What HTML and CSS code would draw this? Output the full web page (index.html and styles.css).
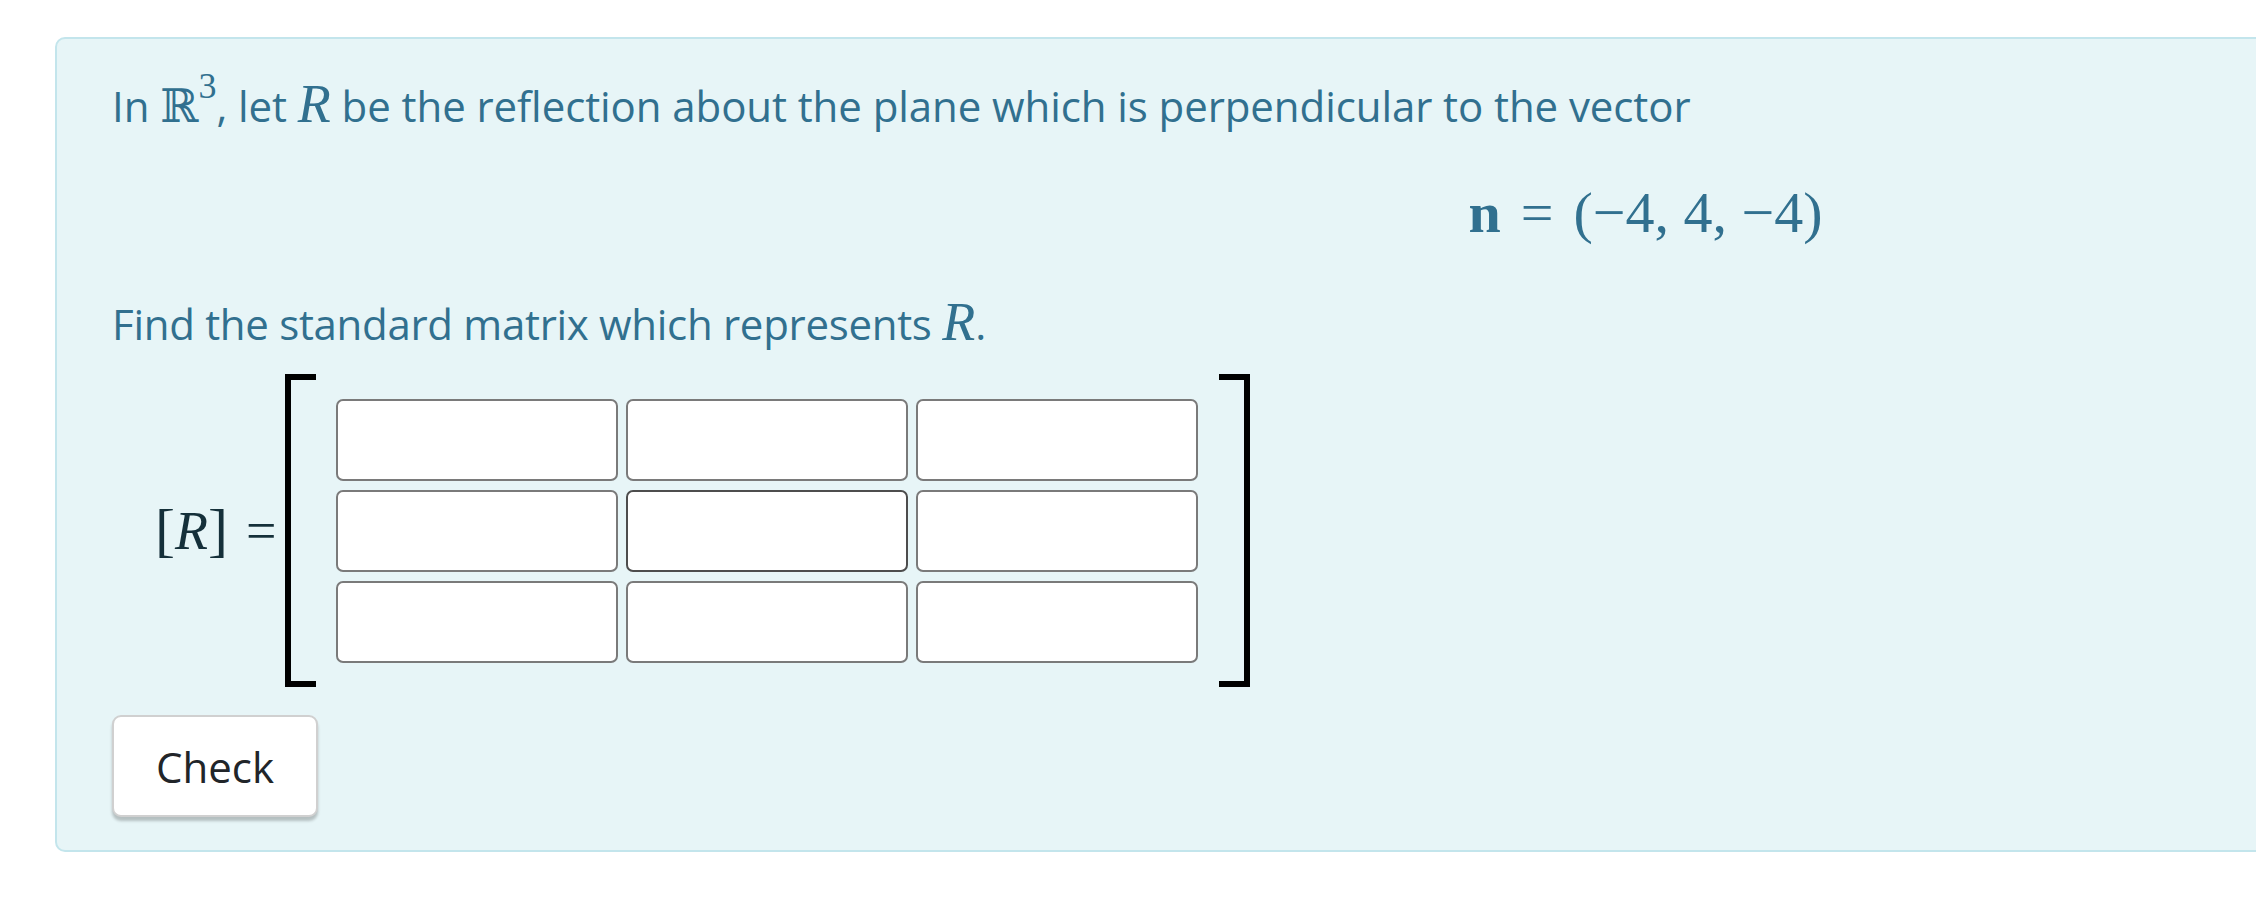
FILE: index.html
```html
<!DOCTYPE html>
<html lang="en">
<head>
<meta charset="utf-8">
<link rel="stylesheet" href="styles.css">
</head>
<body>
<div class="card">
  <p class="line1">In <span class="m"><span class="bb">ℝ</span><sup class="sup">3</sup></span>, let <span class="m mi">R</span> be the reflection about the plane which is perpendicular to the vector</p>
  <div class="display"><span class="bold">n</span><span class="rel">=</span>(−4, 4, −4)</div>
  <p class="line2">Find the standard matrix which represents <span class="m mi">R</span>.</p>
  <div class="eq">
    <div class="lhs"><span class="br">[</span><span class="mi">R</span><span class="br">]</span><span class="eqsign">=</span></div>
    <div class="bracket left"></div>
    <div class="grid">
      <input class="cell" type="text"><input class="cell" type="text"><input class="cell" type="text">
      <input class="cell" type="text"><input class="cell focus" type="text"><input class="cell" type="text">
      <input class="cell" type="text"><input class="cell" type="text"><input class="cell" type="text">
    </div>
    <div class="bracket right"></div>
  </div>
  <button class="check" type="button">Check</button>
</div>
</body>
</html>
```
FILE: styles.css
```css
html, body {
  margin: 0;
  padding: 0;
  background: #ffffff;
  overflow: hidden;
}
body {
  font-family: "Open Sans", "Noto Sans", sans-serif;
  color: #31708f;
}
.card {
  box-sizing: border-box;
  width: 3181px;
  margin: 37px 0 0 55px;
  padding: 33px 55px 33px 55px;
  border: 2px solid #c3e5ec;
  border-radius: 10px;
  background: #e7f5f7;
}
.line1, .line2 {
  margin: 0;
  font-size: 42px;
  line-height: 64px;
  white-space: nowrap;
}
.line1 {
  letter-spacing: -0.08px;
}
.line2 {
  letter-spacing: -0.3px;
}
.m {
  font-family: "Liberation Serif", "DejaVu Serif", serif;
  font-size: 54px;
  letter-spacing: 0;
}
.mi {
  font-style: italic;
}
.bb {
  font-family: "DejaVu Serif", serif;
  font-size: 46px;
  font-weight: 300;
}
.sup {
  font-size: 36px;
  vertical-align: 24px;
  line-height: 0;
}
.display {
  margin: 40px 0 42px;
  text-align: center;
  font-family: "Liberation Serif", "DejaVu Serif", serif;
  font-size: 58px;
  line-height: 70px;
}
.bold {
  font-weight: bold;
}
.rel {
  margin: 0 20px;
}
.eq {
  display: flex;
  align-items: center;
  margin-top: 18px;
}
.lhs {
  width: 130px;
  margin-left: 43px;
  display: flex;
  align-items: center;
  font-family: "Liberation Serif", "DejaVu Serif", serif;
  font-size: 54px;
  color: #15303a;
}
.lhs .br {
  font-style: normal;
  font-size: 60px;
  font-weight: 300;
}
.eqsign {
  margin-left: 18px;
}
.bracket {
  box-sizing: border-box;
  width: 31px;
  height: 313px;
  border-top: 6px solid #000;
  border-bottom: 6px solid #000;
}
.bracket.left {
  border-left: 6px solid #000;
  margin-right: 20px;
}
.bracket.right {
  border-right: 6px solid #000;
  margin-left: 21px;
}
.grid {
  display: grid;
  grid-template-columns: repeat(3, 282px);
  grid-auto-rows: 82px;
  column-gap: 8px;
  row-gap: 9px;
}
.cell {
  box-sizing: border-box;
  margin: 0;
  width: 282px;
  height: 82px;
  border: 2px solid #7a7a7a;
  border-radius: 7px;
  background: #fff;
  outline: none;
}
.cell.focus {
  border-color: #4d4d4d;
}
.check {
  display: block;
  box-sizing: border-box;
  margin-top: 28px;
  width: 206px;
  height: 102px;
  padding: 0;
  border: 2px solid #d0d0d0;
  border-radius: 9px;
  background: #fff;
  box-shadow: 0 4px 3px rgba(0, 0, 0, 0.22);
  font-family: "Open Sans", "Noto Sans", sans-serif;
  font-size: 42px;
  color: #212529;
}
```
